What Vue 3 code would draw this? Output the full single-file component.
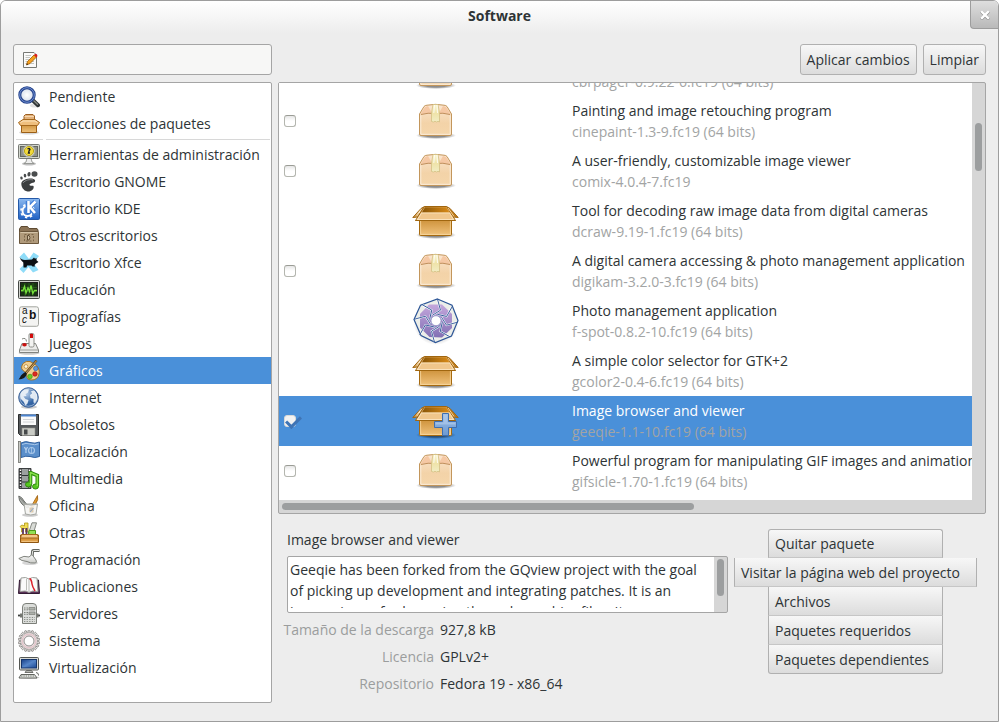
<script setup>
import { ref } from 'vue'

const groups = [
  [
    { id: 'search', name: 'Pendiente' },
    { id: 'collection', name: 'Colecciones de paquetes' },
  ],
  [
    { id: 'admin', name: 'Herramientas de administración' },
    { id: 'gnome', name: 'Escritorio GNOME' },
    { id: 'kde', name: 'Escritorio KDE' },
    { id: 'desktops', name: 'Otros escritorios' },
    { id: 'xfce', name: 'Escritorio Xfce' },
    { id: 'education', name: 'Educación' },
    { id: 'fonts', name: 'Tipografías' },
    { id: 'games', name: 'Juegos' },
    { id: 'graphics', name: 'Gráficos' },
    { id: 'internet', name: 'Internet' },
    { id: 'legacy', name: 'Obsoletos' },
    { id: 'flag', name: 'Localización' },
    { id: 'multimedia', name: 'Multimedia' },
    { id: 'office', name: 'Oficina' },
    { id: 'other', name: 'Otras' },
    { id: 'programming', name: 'Programación' },
    { id: 'publishing', name: 'Publicaciones' },
    { id: 'servers', name: 'Servidores' },
    { id: 'system', name: 'Sistema' },
    { id: 'virtual', name: 'Virtualización' },
  ],
]
const category = ref('graphics')

const packages = ref([
  { title: '', version: 'cbrpager-0.9.22-6.fc19 (64 bits)', icon: 'box', check: true, on: false },
  { title: 'Painting and image retouching program', version: 'cinepaint-1.3-9.fc19 (64 bits)', icon: 'box', check: true, on: false },
  { title: 'A user-friendly, customizable image viewer', version: 'comix-4.0.4-7.fc19', icon: 'box', check: true, on: false },
  { title: 'Tool for decoding raw image data from digital cameras', version: 'dcraw-9.19-1.fc19 (64 bits)', icon: 'open', check: false, on: false },
  { title: 'A digital camera accessing & photo management application', version: 'digikam-3.2.0-3.fc19 (64 bits)', icon: 'box', check: true, on: false },
  { title: 'Photo management application', version: 'f-spot-0.8.2-10.fc19 (64 bits)', icon: 'fspot', check: false, on: false },
  { title: 'A simple color selector for GTK+2', version: 'gcolor2-0.4-6.fc19 (64 bits)', icon: 'open', check: false, on: false },
  { title: 'Image browser and viewer', version: 'geeqie-1.1-10.fc19 (64 bits)', icon: 'plus', check: true, on: true },
  { title: 'Powerful program for manipulating GIF images and animations', version: 'gifsicle-1.70-1.fc19 (64 bits)', icon: 'box', check: true, on: false },
])
const selected = ref(7)
const filter = ref('')

const description = 'Geeqie has been forked from the GQview project with the goal of picking up development and integrating patches. It is an image viewer for browsing through graphics files. Its many'
const facts = [
  ['Tamaño de la descarga', '927,8 kB'],
  ['Licencia', 'GPLv2+'],
  ['Repositorio', 'Fedora 19 - x86_64'],
]
const actions = ['Quitar paquete', 'Visitar la página web del proyecto', 'Archivos', 'Paquetes requeridos', 'Paquetes dependientes']

const gearTeeth = Array.from({ length: 18 }, (_, i) => i * 20)
const blades = Array.from({ length: 8 }, (_, i) => i * 45)
</script>

<template>
  <div class="window">
    <svg class="defs" aria-hidden="true">
      <defs>
        <linearGradient id="g-open" x1="0" y1="0" x2="0" y2="1"><stop offset="0" stop-color="#c88a30" /><stop offset="1" stop-color="#f0c27c" /></linearGradient>
        <linearGradient id="g-in" x1="0" y1="0" x2="1" y2="0"><stop offset="0" stop-color="#8a5607" /><stop offset="1" stop-color="#d88a18" /></linearGradient>
        <linearGradient id="g-rim" x1="0" y1="0" x2="0" y2="1"><stop offset="0" stop-color="#e8b36c" /><stop offset="1" stop-color="#f8dcae" /></linearGradient>
        <linearGradient id="g-flap" x1="0" y1="0" x2="1" y2="0"><stop offset="0" stop-color="#c07a18" /><stop offset="0.6" stop-color="#fbe9cd" /><stop offset="1" stop-color="#c58a38" /></linearGradient>
        <linearGradient id="g-closed" x1="0" y1="0" x2="0" y2="1"><stop offset="0" stop-color="#fbe6d2" /><stop offset="0.6" stop-color="#f3d3a8" /><stop offset="1" stop-color="#f5d6ab" /></linearGradient>
        <linearGradient id="g-tape" x1="0" y1="0" x2="0" y2="1"><stop offset="0" stop-color="#fbf6d2" /><stop offset="0.5" stop-color="#efe3a9" /><stop offset="1" stop-color="#f1edc4" /></linearGradient>
        <linearGradient id="g-plus" x1="0" y1="0" x2="0" y2="1"><stop offset="0" stop-color="#9fbfe6" /><stop offset="1" stop-color="#6c9ad2" /></linearGradient>
        <linearGradient id="g-blue" x1="0" y1="0" x2="0" y2="1"><stop offset="0" stop-color="#8dbaf0" /><stop offset="1" stop-color="#1f61c4" /></linearGradient>
        <linearGradient id="g-screen" x1="0" y1="0" x2="1" y2="1"><stop offset="0" stop-color="#173f86" /><stop offset="0.5" stop-color="#5585c8" /><stop offset="1" stop-color="#1b4892" /></linearGradient>
        <linearGradient id="g-purple" x1="0" y1="0" x2="0" y2="1"><stop offset="0" stop-color="#c4a7dc" /><stop offset="1" stop-color="#8270b4" /></linearGradient>
        <linearGradient id="g-grey" x1="0" y1="0" x2="0" y2="1"><stop offset="0" stop-color="#fdfdfd" /><stop offset="1" stop-color="#c9cac6" /></linearGradient>
        <radialGradient id="g-shadow"><stop offset="0.5" stop-color="#000" stop-opacity="0.45" /><stop offset="1" stop-color="#000" stop-opacity="0" /></radialGradient>
        <radialGradient id="g-globe" cx="0.4" cy="0.3"><stop offset="0" stop-color="#b5cdea" /><stop offset="1" stop-color="#3465a4" /></radialGradient>
        <radialGradient id="g-lens"><stop offset="0" stop-color="#fff" /><stop offset="1" stop-color="#d4dcea" /></radialGradient>
      </defs>

      <!-- package states, 48px grid -->
      <symbol id="i-box" viewBox="0 0 48 48">
        <ellipse cx="25" cy="38.5" rx="20" ry="3.5" fill="url(#g-shadow)" />
        <path d="M8.5 17 L13 9.5 Q14 8.300 16 8.200 Q24.500 6.500 33 8.200 Q35 8.300 36 9.500 L40.500 17 V37 Q40.500 38.500 39 38.500 H10 Q8.500 38.500 8.500 37 Z" fill="url(#g-closed)" stroke="#c3965b" />
        <path d="M9.500 17 L14 10 L17 9 L21 16 Z M39.500 17 L35 10 L32 9 L28 16 Z" fill="#f5c8a4" />
        <path d="M10 17.500 Q17 15.500 24.500 16.500 Q32 15.500 39 17.500" fill="none" stroke="#c08f5c" />
        <path d="M9.800 18.500 V37.300 H39.200 V18.500" fill="none" stroke="#fff" stroke-opacity="0.55" />
        <path d="M22 7.500 H27 L28.500 16 V25 L27 24.300 L25.500 25 L24 24.300 L22.500 25 L20.500 24.500 V16 Z" fill="url(#g-tape)" stroke="#d3c084" stroke-width="0.8" />
        <path d="M23.500 8 L22.800 16 M26 8 L26.500 16" stroke="#fff" stroke-opacity="0.8" />
      </symbol>
      <symbol id="i-open" viewBox="0 0 48 48">
        <ellipse cx="25" cy="38" rx="20" ry="4" fill="url(#g-shadow)" />
        <path d="M8.500 20 H40.500 V37.500 Q40.500 38.500 39.500 38.500 H9.500 Q8.500 38.500 8.500 37.500 Z" fill="url(#g-open)" stroke="#a66a10" />
        <path d="M9.600 23 V37.400 H39.400 V23" fill="none" stroke="#f8d9a3" stroke-opacity="0.8" />
        <path d="M13.500 9.500 L10 11.500 L1.800 20.500 L6.500 20 Z" fill="url(#g-flap)" stroke="#a0660f" />
        <path d="M35.500 9.500 L39 11.500 L47.200 20.500 L42.500 20 Z" fill="#bf7c1d" stroke="#a0660f" />
        <path d="M13.500 9.500 H35.500 L44.500 23.500 H4.500 Z" fill="url(#g-rim)" stroke="#a0660f" />
        <path d="M14 10.300 H35 L38.500 15.500 H10.800 Z" fill="url(#g-in)" />
        <path d="M6.500 22.500 L10.500 16 H38.600 L42.500 22.500 Z" fill="#f0c68b" stroke="#fbe7c7" stroke-width="0.8" />
        <path d="M4.500 23.500 H44.500" stroke="#a0660f" />
        <path d="M37 11 L43 19.500" stroke="#f5cf94" />
      </symbol>
      <symbol id="i-plus" viewBox="0 0 48 48">
        <use href="#i-open" width="48" height="48" />
        <path d="M31.500 16.500 H37.500 V24.500 H45.500 V30.500 H37.500 V38.500 H31.500 V30.500 H23.500 V24.500 H31.500 Z" fill="url(#g-plus)" stroke="#3e6fb0" />
        <path d="M32.500 17.500 H36.500 V25.500 H44.500 V27.500 H24.500 V25.500 H32.500 Z" fill="#b4cdec" fill-opacity="0.6" />
      </symbol>
      <symbol id="i-fspot" viewBox="0 0 48 48">
        <circle cx="25" cy="25.500" r="22.500" fill="url(#g-shadow)" opacity="0.7" />
        <path d="M26.500 2 L41 8.300 L47 23.500 L40.500 39 L24.500 45.500 L10 38.500 L3 22.500 L9.500 8.300 Z" fill="#eceee9" stroke="#2c5596" stroke-width="1.200" />
        <path d="M18 7.500 L31 7.500 L41 17 L41 31 L31 40.500 L18.500 40 L9 30.500 L9 17 Z" fill="url(#g-purple)" />
        <g transform="translate(25 23.700)">
          <g v-for="a in blades" :key="a" :transform="`rotate(${a})`">
            <path d="M1.500 -20.500 L4.500 -10.500 L-3.500 -5.500" fill="none" stroke="#fff" stroke-width="1.800" />
          </g>
          <g v-for="a in blades" :key="'l' + a" :transform="`rotate(${a})`">
            <path d="M1.500 -21.500 L4.500 -10.500 L-3.500 -5.500" fill="none" stroke="#2c5596" stroke-width="0.900" />
          </g>
          <circle r="5" fill="#fff" stroke="#8c95c4" stroke-width="0.800" />
        </g>
      </symbol>

      <!-- category icons, 22px grid -->
      <symbol id="i-search" viewBox="0 0 22 22">
        <ellipse cx="17" cy="19.500" rx="5" ry="2" fill="#000" opacity="0.12" />
        <path d="M15 14.500 L20 19.200" stroke="#2e3436" stroke-width="4" stroke-linecap="round" />
        <path d="M15.500 14.500 L19.500 18.300" stroke="#888a85" stroke-width="1.300" stroke-linecap="round" />
        <circle cx="9" cy="9" r="7.200" fill="url(#g-lens)" stroke="#23418a" stroke-width="3" />
        <circle cx="9" cy="9" r="7.300" fill="none" stroke="#6f8fd2" stroke-width="1" />
      </symbol>
      <symbol id="i-collection" viewBox="0 0 22 22">
        <ellipse cx="11" cy="19.500" rx="10" ry="2" fill="#000" opacity="0.15" />
        <path d="M6 7 V3 L7.500 1.500 H15 L16.500 3 V7 Z" fill="#e3b27c" stroke="#9c5f22" />
        <path d="M6.500 3.500 H16" stroke="#f6d6ad" />
        <path d="M3.500 10 H18.500 V19.500 H3.500 Z" fill="url(#g-open)" stroke="#9c5f16" />
        <path d="M5 6.500 H17 L21.500 9.500 L19.500 12.500 H2.500 L0.500 9.500 Z" fill="#efbf7d" stroke="#a5681d" />
        <path d="M2.500 9.500 L5 8 H17 L19.500 9.500" fill="none" stroke="#fbe3bd" />
      </symbol>
      <symbol id="i-admin" viewBox="0 0 22 22">
        <ellipse cx="11" cy="19.800" rx="7" ry="1.700" fill="#000" opacity="0.25" />
        <path d="M9 14 H13 L14 18 Q16 19 16 19.500 H6 Q6 19 8 18 Z" fill="#eee" stroke="#888a85" stroke-width="0.800" />
        <rect x="0.500" y="0.500" width="21" height="14" rx="1" fill="#d3d7cf" stroke="#777974" />
        <rect x="2.500" y="2.500" width="17" height="10" fill="#8f938b" stroke="#63665f" />
        <circle cx="11" cy="7" r="6" fill="#e3e4e0" stroke="#a4a6a0" />
        <circle cx="11" cy="7" r="4.600" fill="#f2da3a" stroke="#b9a51b" />
        <path d="M9.500 5 Q11.500 3.800 12 5.500 L11 7 L10.500 9 H12" fill="none" stroke="#222" stroke-width="1.400" />
      </symbol>
      <symbol id="i-gnome" viewBox="0 0 22 22">
        <ellipse cx="16.500" cy="3" rx="3" ry="2.700" fill="#4a4d4e" />
        <ellipse cx="11" cy="3.200" rx="1.600" ry="2.300" fill="#4a4d4e" transform="rotate(12 11 3.200)" />
        <ellipse cx="7" cy="4.700" rx="1.300" ry="1.900" fill="#4a4d4e" transform="rotate(-5 7 4.700)" />
        <ellipse cx="3.500" cy="7" rx="1.200" ry="1.600" fill="#4a4d4e" transform="rotate(-20 3.500 7)" />
        <path d="M3.500 11.500 C5 7.500 15.500 6 17 9 C18 12.500 12.500 11.500 11.500 13.500 C11 15 14 14.500 15.500 15 C16.500 18 13.500 20.800 9.500 20.500 C5.500 20 2.500 15 3.500 11.500 Z" fill="#3c3f40" />
        <path d="M5 12 C7 9 12 8 15 9" fill="none" stroke="#85888a" />
      </symbol>
      <symbol id="i-kde" viewBox="0 0 22 22">
        <rect x="0.500" y="0.500" width="21" height="21" rx="1" fill="url(#g-blue)" stroke="#2459a8" />
        <circle cx="9.500" cy="13" r="5" fill="none" stroke="#fff" stroke-width="2" />
        <circle cx="9.500" cy="13" r="6.500" fill="none" stroke="#fff" stroke-width="1.800" stroke-dasharray="2.300 2.800" />
        <path d="M10 3 V14.500 M17.500 3.500 L11.500 9 L17 15.500" fill="none" stroke="#3f7dd6" stroke-width="4.500" />
        <path d="M10.500 3 V15 M17.500 3.500 L12 9 L17 15" fill="none" stroke="#fff" stroke-width="2.500" />
      </symbol>
      <symbol id="i-desktops" viewBox="0 0 22 22">
        <path d="M1.500 17.500 V4 L3 1.500 H9.500 L11 3.500 H19 L20 5 V17.500 Z" fill="#8b7356" stroke="#5e4b33" />
        <path d="M1.500 18.500 V7.500 Q1.500 6.500 2.500 6.500 H20 Q20.500 6.500 20.500 7.500 V18.500 Z" fill="#b09a7b" stroke="#6b563b" />
        <path d="M2.500 7.500 H19.500" stroke="#d3c2a6" />
        <path d="M6.500 9.500 H15.500 V16 H6.500 Z" fill="none" stroke="#7d6749" stroke-dasharray="2 1.500" />
        <path d="M9.500 10.500 V15 H11 Q13 12.700 11 10.500 Z" fill="#d3c2a6" stroke="#5e4b33" />
      </symbol>
      <symbol id="i-xfce" viewBox="0 0 22 22">
        <path d="M6 0.500 L11 7 L15.500 0.500 L21 4 L15.500 11 L20.500 18 L15 20.500 L10.500 15 L5.500 21 L1.500 17 L7 11.500 L1.500 5 Z" fill="#8fdcf8" />
        <path d="M1.500 5 Q3 8 7 8 L14 7.500 L16 5.500 L17 6.800 L18.500 6 L18.500 8.300 L20.500 10 L18 11.500 L16.500 13 L17 14.500 H14.500 L13.500 13.500 L9 13.500 L8.500 15.500 H5.500 L5.300 10.500 Q2.500 8.500 1.500 5 Z" fill="#0b0f12" />
      </symbol>
      <symbol id="i-education" viewBox="0 0 22 22">
        <rect x="0.500" y="1.500" width="21" height="18" rx="1" fill="#d0d2cd" stroke="#454845" />
        <rect x="2.500" y="3.500" width="17" height="13.500" fill="#183512" stroke="#1b1d1b" />
        <path d="M3 8.500 H19 M3 12.500 H19 M7 4 V17 M11 4 V17 M15 4 V17" stroke="#2f6321" stroke-width="0.800" />
        <path d="M3 11.500 H5 L6.500 7.500 L8 14 L10 9 L11.500 12.500 L13 6.500 L14.800 14.500 L16.500 11.500 H19" fill="none" stroke="#77e23c" stroke-width="1.300" />
      </symbol>
      <symbol id="i-fonts" viewBox="0 0 22 22">
        <rect x="1.500" y="0.800" width="19" height="19.500" rx="2" fill="#f4f4f2" stroke="#a3a59f" />
      </symbol>
      <symbol id="i-games" viewBox="0 0 22 22">
        <ellipse cx="11" cy="20" rx="10.500" ry="1.700" fill="#000" opacity="0.2" />
        <path d="M4 10.500 H17.500 L20.500 17 V19.500 H1.500 V17 Z" fill="#ececea" stroke="#82847f" />
        <path d="M2 17 H20" stroke="#9a9c97" />
        <path d="M4 6 Q8 4 8.500 8.500" fill="none" stroke="#82847f" />
        <ellipse cx="6.500" cy="11.700" rx="2.300" ry="1.700" fill="#c8100e" />
        <rect x="11" y="0.500" width="5" height="13.500" rx="1.500" fill="#f3f3f1" stroke="#8c8e88" />
        <rect x="12" y="0.800" width="3" height="4.200" fill="#d30b0b" />
      </symbol>
      <symbol id="i-graphics" viewBox="0 0 22 22">
        <path d="M5 3.500 Q8 0.500 12 1.500 Q14 2.500 16.500 4 Q21.500 7 21.200 13 Q20 20.500 13 20 Q8.500 19.500 8.800 16 Q9.500 12.500 6.500 11.500 Q1.500 9 5 3.500 Z" fill="#f0cf92" stroke="#a87524" />
        <circle cx="8" cy="6.500" r="1.900" fill="#fff6df" stroke="#b58735" stroke-width="0.800" />
        <circle cx="17.700" cy="8.500" r="2.200" fill="#5a97dd" stroke="#2b5ea3" stroke-width="0.600" />
        <circle cx="12" cy="16.500" r="2.300" fill="#66cf24" stroke="#3c8710" stroke-width="0.600" />
        <circle cx="17" cy="14" r="2.300" fill="#df2a20" stroke="#97130d" stroke-width="0.600" />
        <path d="M18.500 0.500 L7.500 13.500" stroke="#6d4a1a" stroke-width="2.400" />
        <path d="M18.500 0.800 L8 13" stroke="#c9a468" stroke-width="1" />
        <path d="M7.500 12 L8.800 13.800 Q7.500 19.500 0.500 19.500 Q2 17.500 3 15.500 Q5 13 7.500 12 Z" fill="#15181a" />
      </symbol>
      <symbol id="i-internet" viewBox="0 0 22 22">
        <ellipse cx="11" cy="20" rx="8" ry="1.700" fill="#000" opacity="0.2" />
        <circle cx="10.500" cy="10.500" r="9.800" fill="url(#g-globe)" stroke="#3a5f95" />
        <path d="M4 4.500 Q7 1.500 11 2.500 L10 5.500 L7.500 7 L8.500 9 L5.500 9.500 L7.500 12 L10.500 13 L9.500 16.500 L7.500 18.500 L5.500 14.500 L2.500 11.500 Q1.500 7 4 4.500 Z M13 4 L16.500 3.800 L19 7.500 L19.300 12 L17 16 L15.500 15.500 L15.500 12 L12.500 11 L12 8 L14 6.500 Z" fill="#eef3f8" fill-opacity="0.92" />
        <circle cx="10.500" cy="10.500" r="8.700" fill="none" stroke="#fff" stroke-opacity="0.45" />
      </symbol>
      <symbol id="i-legacy" viewBox="0 0 22 22">
        <path d="M0.500 0.500 H20.500 V21.500 H2.500 L0.500 19.500 Z" fill="#55585a" stroke="#2a2c2d" />
        <rect x="3" y="0.500" width="15" height="10.500" fill="#fafafa" />
        <rect x="3" y="0.500" width="15" height="2" fill="#4b84d0" />
        <path d="M5 5.500 H16 M5 8 H16" stroke="#d2d4d6" />
        <rect x="4" y="14" width="13" height="7.500" fill="#c9cbc5" stroke="#8e908b" stroke-width="0.600" />
        <rect x="6" y="15.500" width="3.500" height="5" fill="#46494a" />
      </symbol>
      <symbol id="i-flag" viewBox="0 0 22 22">
        <path d="M3 2 Q8 -0.500 12 1.500 Q17 3 21.500 1 V15.500 Q17 17.500 12 15.500 Q8 14.500 3 16.500 Z" fill="#5b8fca" stroke="#2f609f" />
        <path d="M4 3.500 Q8 1.500 12 3 Q17 4.500 20.500 2.800" fill="none" stroke="#a8c7ea" />
        <path d="M6.500 6 L8 9 L9.500 6 M8 9 V12" fill="none" stroke="#b9d3ef" stroke-width="1.200" />
        <circle cx="13.500" cy="9.500" r="3" fill="none" stroke="#a9c8ea" stroke-width="1.200" />
        <path d="M13.500 6.500 V12.500" stroke="#a9c8ea" stroke-width="0.800" />
        <rect x="0.500" y="0.500" width="2" height="21" fill="#c9cbc6" stroke="#6f716c" stroke-width="0.800" />
      </symbol>
      <symbol id="i-multimedia" viewBox="0 0 22 22">
        <path d="M1 0.500 H13 V20.500 H1 Z" fill="#9ba0a0" stroke="#3c3f40" />
        <path d="M2.500 1 V20 M11.500 1 V20" stroke="#222" stroke-width="2.400" />
        <path d="M2.500 1.500 V20 M11.500 1.500 V20" stroke="#fff" stroke-width="1.400" stroke-dasharray="1.500 1.500" />
        <path d="M4 7.500 H10 M4 14 H10" stroke="#2e3436" />
        <path d="M12 4.500 L19.300 7.500 V18 M12.500 3 V16" fill="none" stroke="#2d8a0b" stroke-width="3.600" />
        <ellipse cx="10.500" cy="16.500" rx="3" ry="2.500" fill="#54c71f" stroke="#2d8a0b" />
        <ellipse cx="17.500" cy="18.500" rx="3" ry="2.500" fill="#54c71f" stroke="#2d8a0b" />
        <path d="M12.500 4.500 L19.300 7.500 V18 M12.500 4 V16" fill="none" stroke="#86e04b" stroke-width="1.600" />
      </symbol>
      <symbol id="i-office" viewBox="0 0 22 22">
        <ellipse cx="12" cy="20" rx="8" ry="1.700" fill="#000" opacity="0.2" />
        <path d="M0.800 1 Q4 2 6 6 L11 12 L9 13 L4 9 Q0.500 5.500 0.800 1 Z" fill="#aeb1ad" stroke="#696c68" />
        <path d="M2 3 L10 12" stroke="#696c68" stroke-width="0.700" />
        <path d="M19.500 0.500 Q20.500 5 18 8 L14.500 13 L13 12 L16 6.500 Z" fill="#e09a2e" stroke="#9a5c0c" stroke-width="0.800" />
        <path d="M6 9 H19.500 L18 19 Q12.500 21 7.500 19 Z" fill="#f5f5f3" fill-opacity="0.9" stroke="#a5a7a2" />
        <path d="M6 9 Q12.500 11 19.500 9" fill="none" stroke="#a5a7a2" />
        <rect x="11.500" y="12.500" width="4" height="5" fill="#d9c9b0" />
        <path d="M12 17 L15.500 13" stroke="#8aa7cf" />
      </symbol>
      <symbol id="i-other" viewBox="0 0 22 22">
        <path d="M6.500 1 H10 V10 H7.500 V6.500 H5 V10 H3.500 V6 L2 4.500 L4 3 L6.500 4 Z" fill="#f2dc55" stroke="#ae9713" stroke-width="0.800" />
        <path d="M5 6 V12 M8.500 6 V12" stroke="#5b3566" stroke-width="1.800" />
        <path d="M14 0.800 H18.500 L15.500 11 H10.500 Z" fill="#d8dbd6" stroke="#858882" />
        <path d="M11 8.500 H17.500 V12.500 H10.500 Z" fill="#93e054" stroke="#4d9a1a" />
        <path d="M2.500 13 H20.500 V20.500 H2.500 Z" fill="#d9953b" stroke="#8f5511" />
        <path d="M3.500 12.500 H19.500 L20.500 16 H2.500 Z" fill="#f3c88a" stroke="#a0641a" />
        <path d="M3.500 19.300 H19.500" stroke="#f5cb8c" />
      </symbol>
      <symbol id="i-programming" viewBox="0 0 22 22">
        <ellipse cx="12" cy="14" rx="8" ry="2" fill="#000" opacity="0.16" />
        <path d="M21.500 1.500 H15.500 Q14.500 1.500 14.500 3 L14 9" fill="none" stroke="#61645f" stroke-width="3" />
        <path d="M21 1.500 H15.500 Q14.500 1.500 14.500 3 L14 9" fill="none" stroke="#e4e5e2" stroke-width="1" />
        <path d="M0.800 9.500 Q6 6 11 8 L14 5.500 L18 11 Q19 13.500 17.500 14 Q12 14.500 9 12.500 Q3 12 0.800 9.500 Z" fill="url(#g-grey)" stroke="#7f827c" />
      </symbol>
      <symbol id="i-publishing" viewBox="0 0 22 22">
        <path d="M0.500 17.500 L1.500 4 H20.500 L21.500 17.500 Z" fill="#5a3158" stroke="#331b33" />
        <path d="M2 15.500 L3 2 Q8 0.500 11 3 Q14 0.500 19 2 L20 15.500 Q14 14 11 16.500 Q8 14 2 15.500 Z" fill="#fafafa" stroke="#9c9e99" />
        <path d="M11 3 V16 M8.500 3 V14.500" stroke="#bcbeb9" />
        <path d="M11.500 2.500 Q13.500 3.500 14 8 Q14.500 11 17 15" fill="none" stroke="#dc1f2b" stroke-width="1.500" />
      </symbol>
      <symbol id="i-servers" viewBox="0 0 22 22">
        <path d="M0 12.500 H22" stroke="#3f4240" stroke-width="1.800" />
        <path d="M3 10.500 V14.500 M19.500 10.500 V14.500" stroke="#747771" stroke-width="2" />
        <path d="M4.500 20.500 V4 Q4.500 0.500 8 0.500 H15 Q18.500 0.500 18.500 4 V20.500 Z" fill="#dcdedb" stroke="#7c7f79" />
        <path d="M6 5 H10 M6 9.500 H10 M6 6.800 H10 M6 11.300 H10" stroke="#7e817b" stroke-dasharray="1.500 1" />
        <path d="M11 4.500 H17 V7 H11 Z M11 9 H17 V11.500 H11 Z" fill="#aeb2ac" stroke="#7c7f79" stroke-width="0.700" />
        <path d="M6 14.500 H17 M6 16.500 H17 M6 18.500 H17" stroke="#8c8f89" stroke-dasharray="1.300 1.300" />
      </symbol>
      <symbol id="i-system" viewBox="0 0 22 22">
        <g transform="translate(11 11)">
          <rect v-for="a in gearTeeth" :key="a" x="-1" y="-10.800" width="2" height="4" rx="0.500" fill="#e5e1e0" stroke="#858381" stroke-width="0.800" :transform="`rotate(${a})`" />
          <circle r="8.300" fill="#efe8e8" stroke="#a09d9b" stroke-width="0.600" />
          <circle r="6.800" fill="none" stroke="#e2c6cb" stroke-width="1.500" />
          <circle r="5" fill="#fff" stroke="#8f8c8b" />
        </g>
      </symbol>
      <symbol id="i-virtual" viewBox="0 0 22 22">
        <ellipse cx="11" cy="20.500" rx="10.500" ry="1.500" fill="#000" opacity="0.2" />
        <rect x="1.500" y="0.500" width="19" height="12.500" rx="1" fill="#d8dad6" stroke="#555753" />
        <rect x="3.500" y="2.500" width="15" height="8.500" fill="url(#g-screen)" stroke="#16356b" />
        <path d="M8.500 13.500 H13.500 L15 15.500 H7 Z" fill="#b6b8b3" stroke="#555753" stroke-width="0.800" />
        <path d="M3 17.500 H16.500 L19 21 H1 Z" fill="#eceeea" stroke="#62655f" />
        <path d="M3 19 H17" stroke="#6d706a" stroke-dasharray="1.500 0.800" />
        <path d="M18 15.500 Q21 16 20.500 18.500" fill="none" stroke="#62655f" />
      </symbol>
      <symbol id="i-edit" viewBox="0 0 16 16">
        <path d="M1.500 0.500 H12 L14.500 3 V15.500 H1.500 Z" fill="#fbfbfa" stroke="#777974" />
        <path d="M3.500 3.500 H9 M3.500 5.500 H8 M3.500 7.500 H7 M3.500 9.500 H12 M3.500 11.500 H12" stroke="#c3c5c0" />
        <path d="M4.500 13 L5.500 9.500 L12 3 L14.500 5 L8 11.500 Z" fill="#f5a01c" stroke="#a05c06" stroke-width="0.800" />
        <path d="M12 3 L13 2 Q14.500 1.500 15.300 3 Q15.800 4 14.500 5.500 Z" fill="#dc1c1c" />
        <path d="M4.500 13 L5 11.200 L6.200 12.400 Z" fill="#222" />
      </symbol>
    </svg>

    <header class="titlebar">
      <h1 class="title">Software</h1>
      <button class="close" type="button" aria-label="Cerrar">
        <svg class="cross" viewBox="0 0 10 10"><path d="M2 2.500 L8 8.500 M8 2.500 L2 8.500" stroke="#8b8b8b" stroke-width="3" stroke-linecap="square" /><path d="M2 2 L8 8 M8 2 L2 8" stroke="#fff" stroke-width="2.400" stroke-linecap="square" /></svg>
      </button>
    </header>

    <main class="layout">
      <label class="search">
        <svg class="edit"><use href="#i-edit" /></svg>
        <input v-model="filter" class="search-input" type="text" aria-label="Buscar paquetes">
      </label>
      <div class="toolbar">
        <button class="btn" type="button">Aplicar cambios</button>
        <button class="btn" type="button">Limpiar</button>
      </div>

      <nav class="sidebar">
        <ul v-for="(group, g) in groups" :key="g" class="group">
          <li v-for="c in group" :key="c.id">
            <button class="category" :class="{ active: category === c.id }" type="button" @click="category = c.id">
              <svg class="category-icon" viewBox="0 0 22 22">
                <use :href="'#i-' + c.id" width="22" height="22" />
                <g v-if="c.id === 'fonts'" class="letters" aria-hidden="true">
                  <text x="4" y="8">a</text>
                  <text class="bold" x="11" y="13">b</text>
                  <text class="italic" x="4" y="17">c</text>
                </g>
              </svg>
              <span>{{ c.name }}</span>
            </button>
          </li>
        </ul>
      </nav>

      <section class="content">
        <div class="list">
          <div class="viewport">
            <table class="packages">
              <tbody>
                <tr v-for="(p, i) in packages" :key="p.version" class="package" :class="{ selected: selected === i }" @click="selected = i">
                  <td class="cell-check"><input v-if="p.check" v-model="p.on" class="check" type="checkbox" :aria-label="p.version"></td>
                  <td class="cell-icon"><svg class="package-icon"><use :href="'#i-' + p.icon" /></svg></td>
                  <td class="cell-text">
                    <div class="line">{{ p.title }}</div>
                    <div class="line version">{{ p.version }}</div>
                  </td>
                </tr>
              </tbody>
            </table>
          </div>
          <div class="vbar"><div class="vthumb"></div></div>
          <div class="hbar"><div class="hthumb"></div></div>
        </div>

        <div class="details">
          <div class="info">
            <label class="summary" for="description">Image browser and viewer</label>
            <div class="text-frame">
              <textarea id="description" class="description" readonly :value="description"></textarea>
              <div class="text-bar"><div class="text-thumb"></div></div>
            </div>
            <dl class="facts">
              <template v-for="f in facts" :key="f[0]">
                <dt>{{ f[0] }}</dt>
                <dd>{{ f[1] }}</dd>
              </template>
            </dl>
          </div>
          <div class="actions">
            <button v-for="a in actions" :key="a" class="action" type="button">{{ a }}</button>
          </div>
        </div>
      </section>
    </main>
  </div>
</template>

<style>
body {
  background: #fff;
}
</style>

<style scoped>
* {
  box-sizing: border-box;
}

.window {
  display: flex;
  flex-direction: column;
  min-height: 100vh;
  border: 1px solid #9d9d9d;
  border-radius: 6px 6px 0 0;
  background: #ededed;
  color: #2e3436;
  font: 14px/21px "Open Sans", "Noto Sans", sans-serif;
  overflow: hidden;
}

.defs {
  position: absolute;
  width: 0;
  height: 0;
}

button,
input,
textarea {
  margin: 0;
  font: inherit;
  color: inherit;
}

.titlebar {
  position: relative;
  display: flex;
  justify-content: center;
  height: 43px;
  padding-top: 4px;
  background: linear-gradient(#fff, #ededed 32px);
}

.title {
  margin: 0;
  font-size: 14px;
  line-height: 21px;
  font-weight: 700;
}

.close {
  position: absolute;
  top: 0;
  right: 0;
  display: grid;
  place-items: center;
  width: 28px;
  height: 28px;
  padding: 0;
  border: 1px solid #9d9d9d;
  border-width: 0 0 1px 1px;
  border-radius: 0 0 0 4px;
  background: linear-gradient(#dedede, #b9b9b9);
}

.cross {
  width: 10px;
  height: 10px;
}

.layout {
  flex: 1;
  display: grid;
  grid-template-columns: 259px minmax(0, 1fr);
  grid-template-rows: 31px 1fr;
  gap: 7px 6px;
  padding: 0 12px 18px;
}

.search {
  display: flex;
  align-items: center;
  gap: 6px;
  padding: 0 8px;
  border: 1px solid #a5a5a5;
  border-radius: 3px;
  background: #f7f7f6;
}

.edit {
  width: 16px;
  height: 16px;
}

.search-input {
  flex: 1;
  min-width: 0;
  border: 0;
  outline: 0;
  background: none;
}

.toolbar {
  display: flex;
  justify-content: flex-end;
  gap: 6px;
}

.btn,
.action {
  padding: 0 6px;
  border: 1px solid #b0b0b0;
  border-radius: 3px;
  background: linear-gradient(#f7f7f7, #dcdcdc);
}

.sidebar {
  border: 1px solid #a5a5a5;
  border-radius: 2px;
  background: #fff;
}

.group {
  margin: 0;
  padding: 0;
  list-style: none;
}

.group + .group::before {
  content: "";
  display: block;
  height: 1px;
  margin: 2px 1px 1px 2px;
  background: linear-gradient(90deg, #d8d8d8 27px, transparent 27px 30px, #d8d8d8 30px);
}

.category {
  display: flex;
  align-items: center;
  gap: 9px;
  width: 100%;
  height: 27px;
  padding: 0 4px;
  border: 0;
  background: none;
  text-align: left;
  white-space: nowrap;
}

.category.active {
  background: #4a90d9;
  color: #fff;
}

.category-icon {
  flex: none;
  width: 22px;
  height: 22px;
}

.letters {
  fill: #111;
  font: 10px "Liberation Sans", sans-serif;
}

.letters .bold {
  font-size: 12px;
  font-weight: 700;
}

.letters .italic {
  font-style: italic;
}

.content {
  display: flex;
  flex-direction: column;
  min-width: 0;
}

.list {
  display: grid;
  grid-template: 417px 13px / minmax(0, 1fr) 13px;
  border: 1px solid #a5a5a5;
  border-radius: 2px;
  background: #d6d6d6;
}

.viewport {
  overflow: hidden;
  background: #fff;
}

.packages {
  width: 100%;
  margin-top: -37px;
  border-collapse: collapse;
  table-layout: fixed;
}

.package {
  height: 50px;
}

.package td {
  padding: 0;
}

.package.selected {
  background: #4a90d9;
  color: #fff;
}

.cell-check {
  width: 132px;
}

.package .cell-check {
  padding-left: 5px;
}

.cell-icon {
  width: 161px;
}

.check {
  display: block;
  appearance: none;
  width: 12px;
  height: 12px;
  border: 1px solid #b4b6af;
  border-top-color: #9a9c95;
  border-radius: 3px;
  background: linear-gradient(#e6e6e6, #fff 50%);
}

.check:checked {
  position: relative;
  border-color: #d8d8d8;
  background: #f2f2f2;
}

.check:checked::after {
  content: "";
  position: absolute;
  top: -3px;
  left: 4px;
  width: 6px;
  height: 12px;
  border: solid #3f74b5;
  border-width: 0 3px 3px 0;
  transform: rotate(45deg);
}

.package-icon {
  display: block;
  width: 48px;
  height: 48px;
}

.line {
  height: 21px;
  white-space: nowrap;
}

.version {
  color: #a2a4a4;
}

.vbar {
  padding: 40px 3px 0;
}

.vthumb {
  height: 48px;
  border-radius: 4px;
  background: #9c9e9f;
}

.hbar {
  padding: 3px 3px 0;
}

.hthumb {
  width: 60%;
  height: 7px;
  border-radius: 4px;
  background: #9c9e9f;
}

.details {
  display: flex;
  justify-content: space-between;
  gap: 6px;
  padding: 15px 9px 0;
}

.info {
  flex: 1;
  min-width: 0;
}

.summary {
  display: block;
  height: 27px;
}

.text-frame {
  display: flex;
  height: 57px;
  padding: 2px 0 4px 2px;
  border: 1px solid #a5a5a5;
  border-radius: 2px;
  background: linear-gradient(270deg, #d6d6d6 13px, #fff 13px);
}

.description {
  flex: 1;
  min-width: 0;
  padding: 0 8px 0 0;
  border: 0;
  outline: 0;
  resize: none;
  overflow: hidden;
  background: none;
  line-height: 21px;
}

.text-bar {
  width: 13px;
  padding: 0 3px;
}

.text-thumb {
  height: 37px;
  border-radius: 4px;
  background: #9c9e9f;
}

.facts {
  display: grid;
  grid-template-columns: 147px 1fr;
  column-gap: 6px;
  margin: 3px 0 0;
  line-height: 27px;
}

.facts dt {
  display: flex;
  justify-content: flex-end;
  color: #9b9d9d;
  white-space: nowrap;
}

.facts dd {
  margin: 0;
}

.actions {
  display: flex;
  flex-direction: column;
  align-items: center;
  width: 243px;
}

.action {
  width: 175px;
  height: 29px;
  border-width: 0 1px 1px;
  border-bottom-color: #c6c6c6;
  border-radius: 0;
  text-align: left;
  white-space: nowrap;
}

.action:first-child {
  border-top-width: 1px;
  border-radius: 3px 3px 0 0;
}

.action:last-child {
  border-bottom-color: #b0b0b0;
  border-radius: 0 0 3px 3px;
}

.action:nth-child(2) {
  width: 100%;
}
</style>
